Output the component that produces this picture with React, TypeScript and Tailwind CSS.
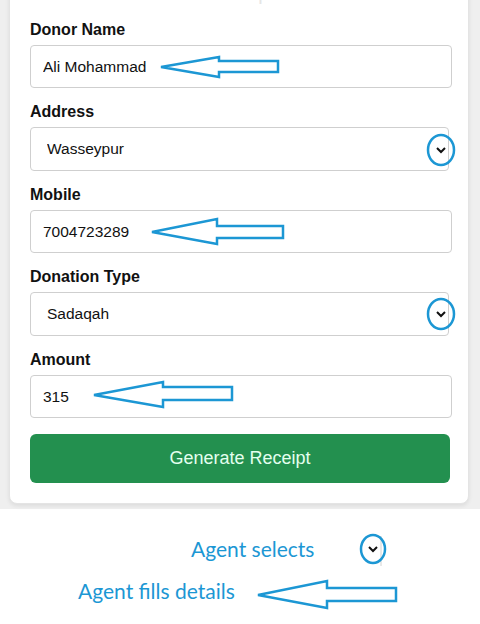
import React from 'react';

const BLUE = '#1c97d4';

function Field({ label, children }: { label: string; children: React.ReactNode }) {
  return (
    <div className="flex flex-col">
      <label className="text-[16px] leading-[20px] font-bold text-[#111] mb-[5px]">{label}</label>
      {children}
    </div>
  );
}

function TextBox({ value }: { value: string }) {
  return (
    <input
      readOnly
      value={value}
      className="h-[43px] w-full rounded-[4px] border border-[#cfcfcf] bg-white pl-3 text-[15.5px] text-[#111] outline-none"
    />
  );
}

function SelectBox({ value }: { value: string }) {
  return (
    <select
      value={value}
      onChange={() => {}}
      className="h-[44px] w-[419px] appearance-none rounded-[4px] border border-[#cfcfcf] bg-white pl-4 text-[15.5px] text-[#111] outline-none"
    >
      <option>{value}</option>
    </select>
  );
}

function Arrow({ tip, hx, hy1, hy2, sx, sy1, sy2 }: { tip: [number, number]; hx: number; hy1: number; hy2: number; sx: number; sy1: number; sy2: number }) {
  const d = `M${tip[0]} ${tip[1]} L${hx} ${hy1} L${hx} ${sy1} L${sx} ${sy1} L${sx} ${sy2} L${hx} ${sy2} L${hx} ${hy2} Z`;
  return <path d={d} fill="none" stroke={BLUE} strokeWidth={2.5} strokeLinejoin="miter" />;
}

function Marker({ cx, cy, rx = 13, ry = 15 }: { cx: number; cy: number; rx?: number; ry?: number }) {
  return (
    <g>
      <ellipse cx={cx} cy={cy} rx={rx} ry={ry} fill="none" stroke={BLUE} strokeWidth={2.5} />
      <path d={`M${cx - 4} ${cy - 2} L${cx} ${cy + 2} L${cx + 4} ${cy - 2}`} fill="none" stroke="#111" strokeWidth={2} />
    </g>
  );
}

export default function App() {
  return (
    <div className="relative w-[480px] h-[624px] overflow-hidden bg-white font-['Liberation_Sans',Arial,sans-serif]">
      <div className="bg-[#efefef] pl-[9px] pr-[11px] pb-[5px]">
        <div className="-mt-[30px] rounded-lg border border-[#e4e4e4] bg-white pt-[8px] pl-5 pr-4 pb-[20px] shadow-[0_2px_4px_rgba(0,0,0,0.08)]">
          <h2 className="text-center text-[20px] leading-7 text-[#e6e6e6]">Receipt</h2>
          <div className="mt-[13px] flex flex-col gap-[14px]">
            <Field label="Donor Name">
              <TextBox value="Ali Mohammad" />
            </Field>
            <Field label="Address">
              <SelectBox value="Wasseypur" />
            </Field>
            <Field label="Mobile">
              <TextBox value="7004723289" />
            </Field>
            <Field label="Donation Type">
              <SelectBox value="Sadaqah" />
            </Field>
            <Field label="Amount">
              <TextBox value="315" />
            </Field>
            <button className="mt-[2px] h-[49px] w-[420px] rounded-md bg-[#23904f] text-[18px] text-[#e3ffee]">
              Generate Receipt
            </button>
          </div>
        </div>
      </div>

      <div className="font-['Lato',sans-serif] text-[21px] text-[#1c97d4]">
        <div className="mt-[26px] pl-[191px] leading-[28px]">Agent selects</div>
        <div className="mt-[14px] pl-[78px] leading-[28px]">Agent fills details</div>
      </div>

      <svg className="pointer-events-none absolute inset-0" width={480} height={624}>
        <Arrow tip={[161, 67]} hx={219} hy1={57} hy2={77} sx={278} sy1={61} sy2={72} />
        <Arrow tip={[152, 232]} hx={217} hy1={219} hy2={244} sx={283} sy1={226} sy2={238} />
        <Arrow tip={[94, 395]} hx={163} hy1={382} hy2={407} sx={232} sy1={387} sy2={400} />
        <Arrow tip={[258, 595]} hx={327} hy1={581} hy2={608} sx={396} sy1={588} sy2={601} />
        <Marker cx={441} cy={150} />
        <Marker cx={441} cy={314} />
        <line x1={381} y1={536} x2={381} y2={566} stroke="#d0d0d0" strokeWidth={1} />
        <Marker cx={373} cy={549} rx={12} ry={14} />
      </svg>
    </div>
  );
}
